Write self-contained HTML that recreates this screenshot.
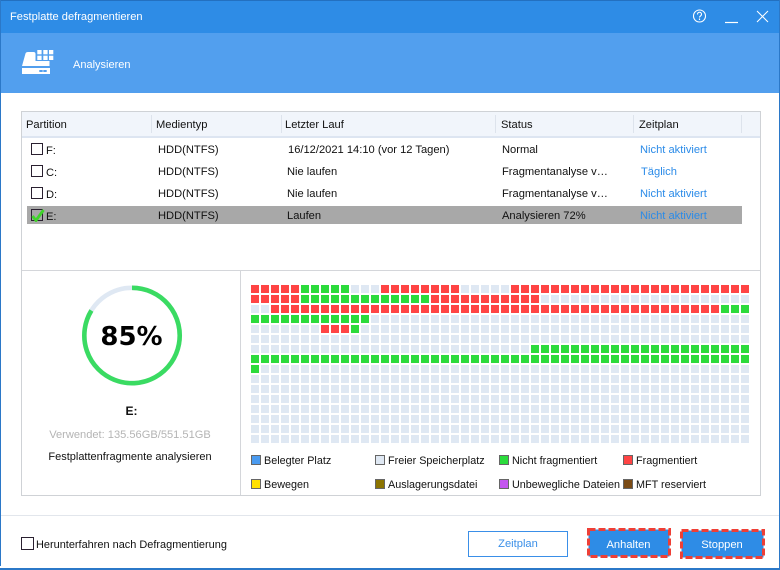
<!DOCTYPE html>
<html><head><meta charset="utf-8">
<style>
*{box-sizing:border-box}
html,body{margin:0;padding:0;background:#fff}
body{width:780px;height:570px;position:relative;overflow:hidden;font-family:"Liberation Sans",sans-serif;font-size:11.15px;color:#111}
.a{position:absolute;white-space:nowrap;line-height:14px}
.r{position:absolute;background:#c9d0d8}
.cb{position:absolute;width:12px;height:12px;border:1px solid #2a2030;background:transparent}
.l{color:#2b8be8}
.sw{position:absolute;width:10px;height:10px;border:1px solid #666}
.t{font-size:10.8px}
</style></head><body>
<div class="r" style="left:0;top:0;width:780px;height:33px;background:#2e8ce6"></div>
<div class="r" style="left:1px;top:33px;width:778px;height:60px;background:#529fee"></div>
<div class="r" style="left:0;top:0;width:780px;height:1px;background:#2370c0"></div>
<div class="r" style="left:0;top:0;width:1px;height:566px;background:#2b78c8"></div>
<div class="r" style="left:779px;top:0;width:1px;height:568px;background:#2b78c8"></div>
<div class="r" style="left:0;top:568px;width:780px;height:2px;background:#2b78c8"></div>
<div class="a" style="left:10px;top:10px;color:#fff;font-size:11.1px">Festplatte defragmentieren</div>
<svg class="a" style="left:690px;top:8px" width="80" height="18" viewBox="0 0 80 18" fill="none" stroke="#fff">
<circle cx="9.500" cy="8" r="6" stroke-width="1.100"/>
<path d="M7.500 6.500c0-3 4-3 4 0 0 1.500-2 1.500-2 3" stroke-width="1.100"/><path d="M9.500 10.500v1.500" stroke-width="1.200"/>
<path d="M35 14.500h13" stroke-width="1.200"/>
<path d="M67 3l11 11M78 3l-11 11" stroke-width="1"/>
</svg>
<svg class="a" style="left:21px;top:49px" width="34" height="26" viewBox="0 0 34 26" fill="#fff">
<path d="M1 17 L4.500 4.500 Q5 3 7 3 H12.500 Q14.500 3 14.500 5 V12 H28.500 V17 Z"/>
<path d="M1 19H29V25H1Z"/>
<rect x="16.300" y="1" width="4.300" height="4.300"/><rect x="22.300" y="1" width="4.300" height="4.300"/><rect x="28" y="1" width="4.300" height="4.300"/>
<rect x="16.300" y="6.700" width="4.300" height="4.300"/><rect x="22.300" y="6.700" width="4.300" height="4.300"/><rect x="28" y="6.700" width="4.300" height="4.300"/>
<rect x="18.300" y="21" width="3.400" height="2" fill="#529fee"/><rect x="22.300" y="21" width="3.400" height="2" fill="#529fee"/>
</svg>
<div class="a" style="left:73px;top:58px;color:#fff;font-size:11px">Analysieren</div>

<div class="a" style="left:21px;top:111px;width:740px;height:385px;border:1px solid #cfd2d6"></div>
<div class="r" style="left:22px;top:112px;width:738px;height:24px;background:#f1f5fb"></div>
<div class="r" style="left:22px;top:136px;width:738px;height:1.500px;background:#dde5f1"></div>
<div class="r" style="left:151px;top:115px;width:1px;height:18px;background:#dde3ec"></div>
<div class="r" style="left:281px;top:115px;width:1px;height:18px;background:#dde3ec"></div>
<div class="r" style="left:495px;top:115px;width:1px;height:18px;background:#dde3ec"></div>
<div class="r" style="left:633px;top:115px;width:1px;height:18px;background:#dde3ec"></div>
<div class="r" style="left:741px;top:115px;width:1px;height:18px;background:#dde3ec"></div>
<div class="a" style="left:26px;top:118px">Partition</div>
<div class="a" style="left:156px;top:118px">Medientyp</div>
<div class="a" style="left:285px;top:118px">Letzter Lauf</div>
<div class="a" style="left:501px;top:118px">Status</div>
<div class="a" style="left:639px;top:118px">Zeitplan</div>

<div class="r" style="left:27px;top:206px;width:715px;height:18px;background:#a8a8a8"></div>
<div class="cb" style="left:31px;top:143px"></div><div class="a" style="left:46px;top:144px">F:</div>
<div class="cb" style="left:31px;top:165px"></div><div class="a" style="left:46px;top:166px">C:</div>
<div class="cb" style="left:31px;top:187px"></div><div class="a" style="left:46px;top:188px">D:</div>
<div class="cb" style="left:31px;top:209px"></div><div class="a" style="left:46px;top:210px">E:</div>
<svg class="a" style="left:31px;top:208px" width="14" height="14" viewBox="0 0 14 14"><path d="M1.500 8 L5 12.500 L12.500 2" fill="none" stroke="#3fd42a" stroke-width="2.800"/></svg>

<div class="a" style="left:158px;top:143px">HDD(NTFS)</div>
<div class="a" style="left:158px;top:165px">HDD(NTFS)</div>
<div class="a" style="left:158px;top:187px">HDD(NTFS)</div>
<div class="a" style="left:158px;top:209px">HDD(NTFS)</div>
<div class="a" style="left:288px;top:143px">16/12/2021 14:10 (vor 12 Tagen)</div>
<div class="a" style="left:287px;top:165px">Nie laufen</div>
<div class="a" style="left:287px;top:187px">Nie laufen</div>
<div class="a" style="left:287px;top:209px">Laufen</div>
<div class="a" style="left:502px;top:143px">Normal</div>
<div class="a" style="left:502px;top:165px">Fragmentanalyse v…</div>
<div class="a" style="left:502px;top:187px">Fragmentanalyse v…</div>
<div class="a" style="left:502px;top:209px">Analysieren 72%</div>
<div class="a l" style="left:640px;top:143px">Nicht aktiviert</div>
<div class="a l" style="left:641px;top:165px">Täglich</div>
<div class="a l" style="left:640px;top:187px">Nicht aktiviert</div>
<div class="a l" style="left:640px;top:209px">Nicht aktiviert</div>

<div class="r" style="left:22px;top:270px;width:738px;height:1px;background:#d4d6da"></div>
<div class="r" style="left:240px;top:271px;width:1px;height:224px;background:#d4d6da"></div>

<svg class="a" style="left:70px;top:275px" width="125" height="125" viewBox="0 0 125 125" fill="none">
<circle cx="62" cy="60.500" r="47.700" stroke="#dfe8f3" stroke-width="4.600"/>
<path d="M62 12.800 A47.700 47.700 0 1 1 21.400 35.500" stroke="#3adb62" stroke-width="4.600"/>
</svg>
<div class="a" style="left:70px;top:322px;width:123px;text-align:center;font-family:'DejaVu Sans',sans-serif;font-size:26px;font-weight:bold;line-height:30px;color:#000">85%</div>
<div class="a" style="left:70px;top:404px;width:123px;text-align:center;font-weight:bold;font-size:12px;color:#111">E:</div>
<div class="a" style="left:22px;top:428px;width:216px;text-align:center;color:#b4b4b4;font-size:11.100px">Verwendet: 135.56GB/551.51GB</div>
<div class="a" style="left:22px;top:450px;width:216px;text-align:center;font-size:11px">Festplattenfragmente analysieren</div>

<svg class="a" style="left:251px;top:285px" width="500" height="160" viewBox="0 0 500 160">
<defs>
<pattern id="f" width="10" height="10" patternUnits="userSpaceOnUse"><rect width="8" height="8" fill="#dfe8f3"/></pattern>
<pattern id="g" width="10" height="10" patternUnits="userSpaceOnUse"><rect width="8" height="8" fill="#2bdb3c"/></pattern>
<pattern id="h" width="10" height="10" patternUnits="userSpaceOnUse"><rect width="8" height="8" fill="#ff4444"/></pattern>
</defs>
<rect x="0" y="0" width="500" height="160" fill="url(#f)"/>
<rect x="0" y="0" width="100" height="10" fill="#fff"/><rect x="130" y="0" width="80" height="10" fill="#fff"/><rect x="260" y="0" width="240" height="10" fill="#fff"/>
<rect x="0" y="10" width="290" height="10" fill="#fff"/>
<rect x="20" y="20" width="480" height="10" fill="#fff"/>
<rect x="0" y="30" width="120" height="10" fill="#fff"/>
<rect x="70" y="40" width="40" height="10" fill="#fff"/>
<rect x="280" y="60" width="220" height="10" fill="#fff"/>
<rect x="0" y="70" width="500" height="10" fill="#fff"/>
<rect x="0" y="80" width="10" height="10" fill="#fff"/>
<rect x="0" y="0" width="50" height="10" fill="url(#h)"/><rect x="50" y="0" width="50" height="10" fill="url(#g)"/><rect x="130" y="0" width="80" height="10" fill="url(#h)"/><rect x="260" y="0" width="240" height="10" fill="url(#h)"/>
<rect x="0" y="10" width="50" height="10" fill="url(#h)"/><rect x="50" y="10" width="130" height="10" fill="url(#g)"/><rect x="180" y="10" width="110" height="10" fill="url(#h)"/>
<rect x="20" y="20" width="450" height="10" fill="url(#h)"/><rect x="470" y="20" width="30" height="10" fill="url(#g)"/>
<rect x="0" y="30" width="120" height="10" fill="url(#g)"/>
<rect x="70" y="40" width="30" height="10" fill="url(#h)"/><rect x="100" y="40" width="10" height="10" fill="url(#g)"/>
<rect x="280" y="60" width="220" height="10" fill="url(#g)"/>
<rect x="0" y="70" width="500" height="10" fill="url(#g)"/>
<rect x="0" y="80" width="10" height="10" fill="url(#g)"/>
</svg>

<div class="sw" style="left:251px;top:455px;background:#4a9bf0"></div><div class="a t" style="left:264px;top:454px">Belegter Platz</div>
<div class="sw" style="left:375px;top:455px;background:#dfe8f3"></div><div class="a t" style="left:388px;top:454px">Freier Speicherplatz</div>
<div class="sw" style="left:499px;top:455px;background:#2bdb3c"></div><div class="a t" style="left:512px;top:454px">Nicht fragmentiert</div>
<div class="sw" style="left:623px;top:455px;background:#ff4444"></div><div class="a t" style="left:636px;top:454px">Fragmentiert</div>
<div class="sw" style="left:251px;top:479px;background:#ffe000"></div><div class="a t" style="left:264px;top:478px">Bewegen</div>
<div class="sw" style="left:375px;top:479px;background:#8c7400"></div><div class="a t" style="left:388px;top:478px">Auslagerungsdatei</div>
<div class="sw" style="left:499px;top:479px;background:#c455f0"></div><div class="a t" style="left:512px;top:478px">Unbewegliche Dateien</div>
<div class="sw" style="left:623px;top:479px;background:#7a4a14"></div><div class="a t" style="left:636px;top:478px">MFT reserviert</div>

<div class="r" style="left:1px;top:515px;width:778px;height:1px;background:#e2e6ec"></div>
<div class="cb" style="left:21px;top:537px;width:13px;height:13px"></div>
<div class="a" style="left:36px;top:538px;font-size:10.950px">Herunterfahren nach Defragmentierung</div>

<div class="a" style="left:468px;top:531px;width:100px;height:26px;border:1px solid #3a8fe8;color:#3a8fe8;text-align:center;line-height:25px">Zeitplan</div>
<svg class="a" style="left:585px;top:526px" width="182" height="36" viewBox="0 0 182 36">
<rect x="3.500" y="3.500" width="81" height="27" fill="#2e8ce6" stroke="#ee3f36" stroke-width="3" stroke-dasharray="7 3"/>
<rect x="96.500" y="4.500" width="82" height="27" fill="#2e8ce6" stroke="#ee3f36" stroke-width="3" stroke-dasharray="7 3"/>
</svg>
<div class="a" style="left:588px;top:538px;width:81px;text-align:center;color:#fff">Anhalten</div>
<div class="a" style="left:681px;top:538px;width:82px;text-align:center;color:#fff">Stoppen</div>
</body></html>
